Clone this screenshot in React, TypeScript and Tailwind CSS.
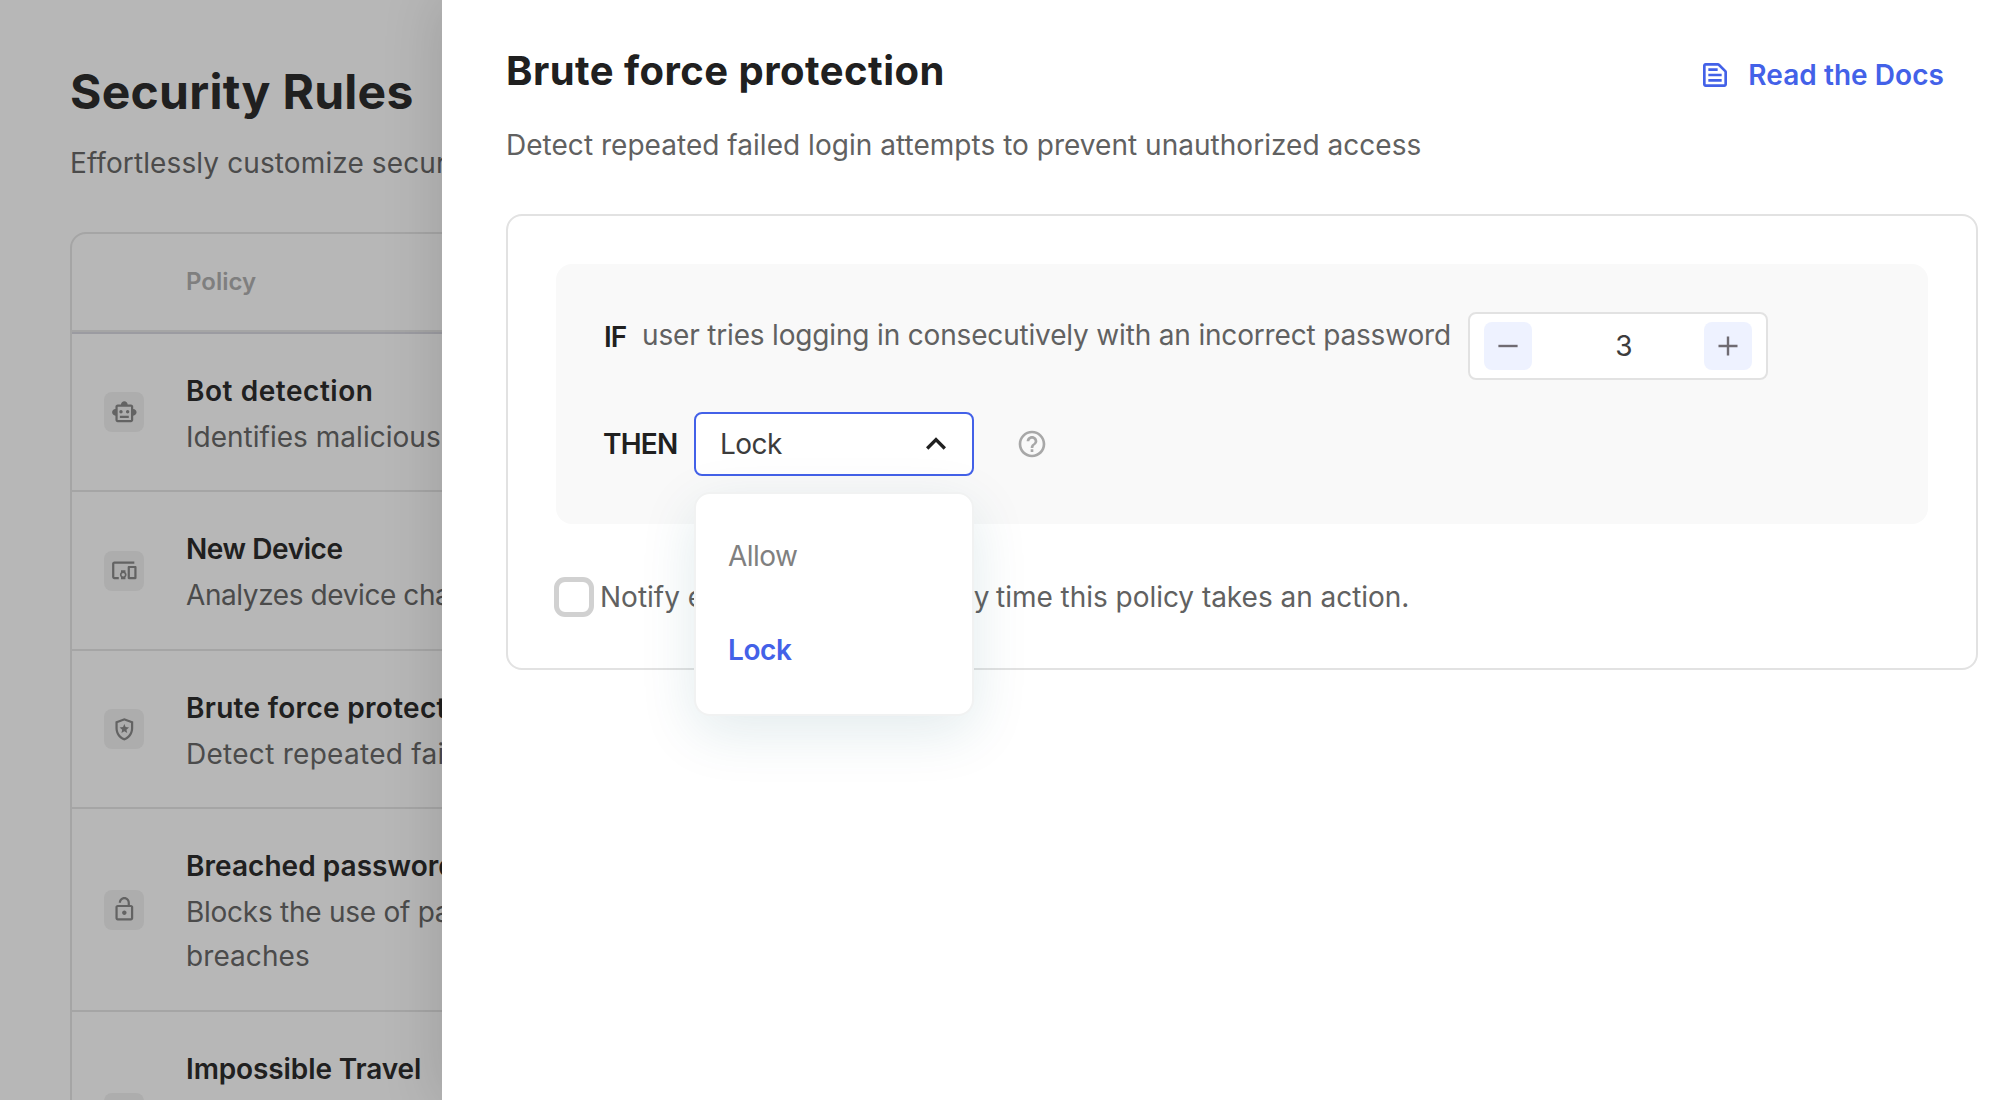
import React, { useState } from 'react';
import {
  MdDevicesOther,
  MdExpandLess,
  MdHelpOutline,
  MdOutlineLockOpen,
  MdOutlineSmartToy,
  MdOutlineTextSnippet,
} from 'react-icons/md';

function ShieldStarIcon({ className }: { className?: string }) {
  return (
    <svg viewBox="0 0 24 24" fill="currentColor" className={className}>
      <path d="M12 2 4 5v6.09c0 5.05 3.41 9.76 8 10.91 4.59-1.15 8-5.86 8-10.91V5l-8-3zm6 9.09c0 4-2.55 7.7-6 8.83-3.45-1.13-6-4.82-6-8.83v-4.7l6-2.25 6 2.25v4.7z" />
      <path d="m9.4 15.3.7-3L7.75 10.25l3.1-.25L12 7.2l1.15 2.8 3.1.25-2.35 2.05.7 3L12 13.7z" />
    </svg>
  );
}

type Policy = {
  title: string;
  titleClass: string;
  lines: { text: string; className: string }[];
  height: string;
  icon: React.ReactNode;
};

const iconClass = 'size-[26.67px]';

const policies: Policy[] = [
  {
    title: 'Bot detection',
    titleClass: 'tracking-[0.55px]',
    lines: [{ text: 'Identifies malicious bots', className: 'tracking-[0.02px]' }],
    height: 'h-[158px]',
    icon: <MdOutlineSmartToy className={iconClass} />,
  },
  {
    title: 'New Device',
    titleClass: 'tracking-[-0.42px]',
    lines: [{ text: 'Analyzes device characteristics', className: 'tracking-[-0.41px]' }],
    height: 'h-[159px]',
    icon: <MdDevicesOther className={iconClass} />,
  },
  {
    title: 'Brute force protection',
    titleClass: 'tracking-[0.3px]',
    lines: [{ text: 'Detect repeated failed login attempts', className: 'tracking-[0.28px]' }],
    height: 'h-[158px]',
    icon: <ShieldStarIcon className={iconClass} />,
  },
  {
    title: 'Breached password',
    titleClass: 'tracking-[0.04px]',
    lines: [
      { text: 'Blocks the use of passwords', className: 'tracking-[-0.26px]' },
      { text: 'breaches', className: 'tracking-[0.08px]' },
    ],
    height: 'h-[203px]',
    icon: <MdOutlineLockOpen className={iconClass} />,
  },
  {
    title: 'Impossible Travel',
    titleClass: 'tracking-[-0.11px]',
    lines: [],
    height: 'h-[203px]',
    icon: null,
  },
];

function RulesPage() {
  return (
    <section className="h-full w-[442px] shrink-0 overflow-hidden bg-[#b7b7b7] pl-[70px] pt-[61px]">
      <h1 className="h-[60px] whitespace-nowrap text-[48px] font-bold leading-[61px] tracking-[0.27px] text-[#202020]">
        Security Rules
      </h1>
      <p className="mt-[20px] h-11 whitespace-nowrap text-[28px] leading-[44px] tracking-[0.11px] text-[#4b4b4b]">
        Effortlessly customize security rules
      </p>
      <div className="mt-[47px] w-[1200px] rounded-tl-[16px] border-2 border-[#a5a5a5]">
        <div className="flex h-[98px] items-center border-b-2 border-[#a5a5a5] pl-[114px] text-[24px] font-semibold text-[#7f7f7f]">
          Policy
        </div>
        <div className="h-0.5 bg-[#9b9ba1]" />
        {policies.map((p) => (
          <div key={p.title} className={`flex border-b-2 border-[#a5a5a5] ${p.height}`}>
            <div className="flex w-[114px] items-center pl-8">
              <div className="flex size-10 items-center justify-center rounded-lg bg-[#adadad] text-[#636363]">
                {p.icon}
              </div>
            </div>
            <div className="whitespace-nowrap pt-[35px] text-[28px] leading-[44px]">
              <div className={`mb-0.5 font-semibold text-[#202020] ${p.titleClass}`}>{p.title}</div>
              {p.lines.map((l) => (
                <div key={l.text} className={`text-[#4b4b4b] ${l.className}`}>
                  {l.text}
                </div>
              ))}
            </div>
          </div>
        ))}
      </div>
    </section>
  );
}

function Stepper() {
  const [value, setValue] = useState(3);
  const button = 'flex size-12 items-center justify-center rounded-lg bg-[#eef2ff] text-[#6f6b72]';
  return (
    <div className="flex h-[68px] w-[300px] items-center justify-between rounded-lg border-2 border-[#e2e2e2] bg-white px-3.5">
      <button className={button} onClick={() => setValue(value - 1)} aria-label="Decrease">
        <svg viewBox="0 0 20 20" className="size-5" stroke="currentColor" strokeWidth="2.4">
          <path d="M.4 10h19.2" />
        </svg>
      </button>
      <span className="ml-3 w-10 text-center text-[28px] leading-[44px] text-[#3c3c3c]">{value}</span>
      <button className={button} onClick={() => setValue(value + 1)} aria-label="Increase">
        <svg viewBox="0 0 20 20" className="size-5" stroke="currentColor" strokeWidth="2.4">
          <path d="M.5 10h19M10 .5v19" />
        </svg>
      </button>
    </div>
  );
}

function ActionSelect() {
  return (
    <div className="relative ml-[18px]">
      <button className="flex h-16 w-[280px] items-center justify-between rounded-lg border-2 border-[#4361e8] bg-white pl-[24px] pr-4 text-[28px] leading-[44px] tracking-[-0.5px] text-[#3c3c3c]">
        Lock
        <MdExpandLess className="size-10 text-[#202020]" />
      </button>
      <div className="absolute left-0 top-20 flex h-[224px] w-[280px] flex-col rounded-[16px] border-2 border-[#f1f2f2] bg-white pt-[15px] text-[28px] shadow-[0_16px_56px_rgba(20,90,105,0.12)]">
        <div className="flex h-[94px] items-center pl-8 tracking-[-0.54px] text-[#808080]">Allow</div>
        <div className="flex h-[94px] items-center pl-8 font-semibold tracking-[-0.4px] text-[#4361e8]">Lock</div>
      </div>
    </div>
  );
}

function Drawer() {
  return (
    <main className="relative h-full flex-1 bg-white pl-[64px] pr-9 pt-[40px] shadow-[0_0_54px_4px_rgba(0,0,0,0.13)]">
      <header className="flex justify-between pr-[34px]">
        <h2 className="h-[60px] whitespace-nowrap text-[40px] font-bold leading-[61px] tracking-[0.47px] text-[#202020]">
          Brute force protection
        </h2>
        <a className="mt-[19px] flex h-8 items-center whitespace-nowrap text-[28px] font-semibold leading-[44px] tracking-[0.05px] text-[#4361e8]">
          <MdOutlineTextSnippet className="mr-[17px] size-8" />
          Read the Docs
        </a>
      </header>
      <p className="mt-[23px] h-11 whitespace-nowrap text-[28px] leading-[44px] tracking-[0.03px] text-[#616161]">
        Detect repeated failed login attempts to prevent unauthorized access
      </p>
      <div className="mt-[47px] h-[456px] rounded-[16px] border-2 border-[#e2e2e2] p-12">
        <div className="h-[260px] rounded-[16px] bg-[#f9f9f9] p-12">
          <div className="flex items-start whitespace-nowrap text-[28px] leading-[44px]">
            <span className="mt-[3px] w-[38px] font-semibold tracking-[-1px] text-[#202020]">IF</span>
            <span className="mt-px w-[826px] tracking-[-0.17px] text-[#616161]">
              user tries logging in consecutively with an incorrect password
            </span>
            <Stepper />
          </div>
          <div className="mt-8 flex items-center whitespace-nowrap text-[28px] leading-[44px]">
            <span className="-ml-px w-[73px] font-semibold tracking-[-0.8px] text-[#202020]">THEN</span>
            <ActionSelect />
            <MdHelpOutline className="ml-[42px] size-8 text-[#a8a8a8]" />
          </div>
        </div>
        <label className="-ml-0.5 mt-[51px] flex items-center whitespace-nowrap text-[28px] leading-[44px] text-[#616161]">
          <span className="mr-1.5 size-10 rounded-[11px] border-[5px] border-[#d1d1d1] bg-white" />
          <span>
            Notify <span className="tracking-[-0.66px]">end user by email every </span>
            <span className="tracking-[-0.03px]">time this policy takes an action.</span>
          </span>
        </label>
      </div>
    </main>
  );
}

export default function App() {
  return (
    <div className="flex h-[1100px] w-full overflow-hidden font-['Inter',sans-serif]">
      <RulesPage />
      <Drawer />
    </div>
  );
}
